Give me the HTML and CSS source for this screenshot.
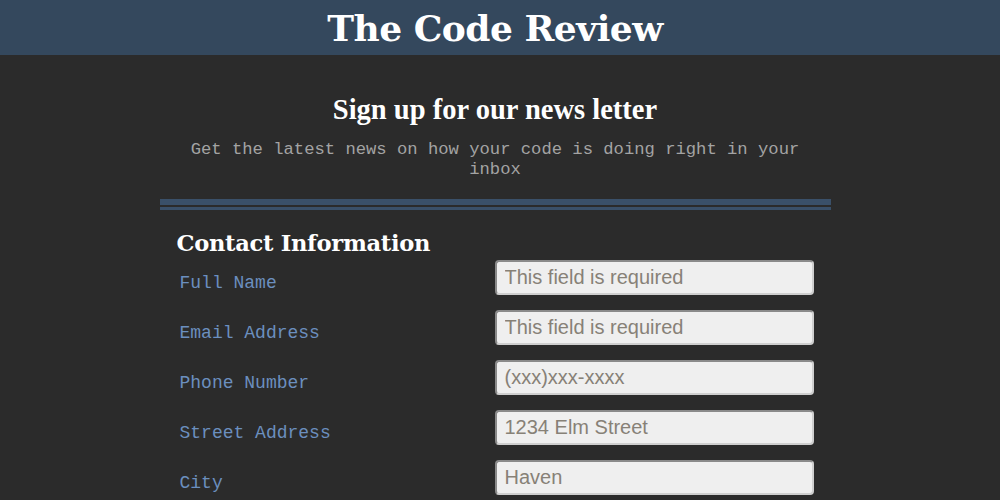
FILE: index.html
```html
<!DOCTYPE html>
<html lang="en">
<head>
<meta charset="utf-8">
<title>The Code Review</title>
<link rel="stylesheet" href="styles.css">
</head>
<body>
<header class="site-header">
  <h1 class="site-title">The Code Review</h1>
</header>
<main class="page">
  <section class="signup">
    <h2 class="signup-title">Sign up for our news letter</h2>
    <p class="signup-sub">Get the latest news on how your code is doing right in your inbox</p>
    <div class="divider"></div>
    <form class="form">
      <h3 class="section-title">Contact Information</h3>
      <div class="row">
        <label class="label" for="name">Full Name</label>
        <input class="field" id="name" type="text" placeholder="This field is required">
      </div>
      <div class="row">
        <label class="label" for="email">Email Address</label>
        <input class="field" id="email" type="text" placeholder="This field is required">
      </div>
      <div class="row">
        <label class="label" for="phone">Phone Number</label>
        <input class="field" id="phone" type="text" placeholder="(xxx)xxx-xxxx">
      </div>
      <div class="row">
        <label class="label" for="street">Street Address</label>
        <input class="field" id="street" type="text" placeholder="1234 Elm Street">
      </div>
      <div class="row">
        <label class="label" for="city">City</label>
        <input class="field" id="city" type="text" placeholder="Haven">
      </div>
    </form>
  </section>
</main>
</body>
</html>
```

FILE: styles.css
```css
* { box-sizing: border-box; }

html, body {
  margin: 0;
  padding: 0;
  background: #2b2b2b;
}

body {
  font-family: "Liberation Serif", serif;
  color: #fff;
}

.site-header {
  background: #34485d;
  height: 55px;
  display: flex;
  align-items: center;
  justify-content: center;
  padding-right: 10px;
}

.site-title {
  margin: 0;
  font-family: "DejaVu Serif", serif;
  font-weight: bold;
  font-size: 36px;
  letter-spacing: -0.5px;
  color: #fff;
  line-height: 1;
}

.page {
  padding-right: 10px;
}

.signup {
  width: 671px;
  margin: 0 auto;
  padding-top: 39px;
}

.signup-title {
  margin: 0;
  text-align: center;
  font-family: "Liberation Serif", serif;
  font-weight: bold;
  font-size: 28.5px;
  line-height: 32px;
  color: #fff;
}

.signup-sub {
  margin: 14px 0 0;
  padding: 0 20px;
  text-align: center;
  font-family: "Liberation Mono", monospace;
  font-size: 17.2px;
  line-height: 20px;
  color: #a3a3a3;
}

.divider {
  margin-top: 19px;
  height: 11px;
  border-top: 6px solid #3a5069;
  border-bottom: 3px solid #3a5069;
}

.form {
  padding-top: 21px;
}

.section-title {
  margin: 0 0 0 17px;
  font-family: "DejaVu Serif", serif;
  font-weight: bold;
  font-size: 22.6px;
  line-height: 24px;
  color: #fff;
  letter-spacing: -0.3px;
}

.row {
  display: grid;
  grid-template-columns: 315px 319px;
  align-items: center;
  padding-left: 20px;
  height: 50px;
}

.label {
  font-family: "Liberation Mono", monospace;
  font-size: 18px;
  color: #6b8fbf;
  padding-top: 6px;
}

.field {
  height: 35px;
  width: 319px;
  margin-top: -6px;
  background: #efefef;
  border: 2px solid;
  border-color: #8a8a8a #cfcfcf #cfcfcf #8a8a8a;
  border-radius: 4px;
  padding: 0 8px;
  font-family: "Liberation Sans", sans-serif;
  font-size: 20px;
  color: #333;
}

.field::placeholder {
  color: #878177;
  opacity: 1;
}
```
